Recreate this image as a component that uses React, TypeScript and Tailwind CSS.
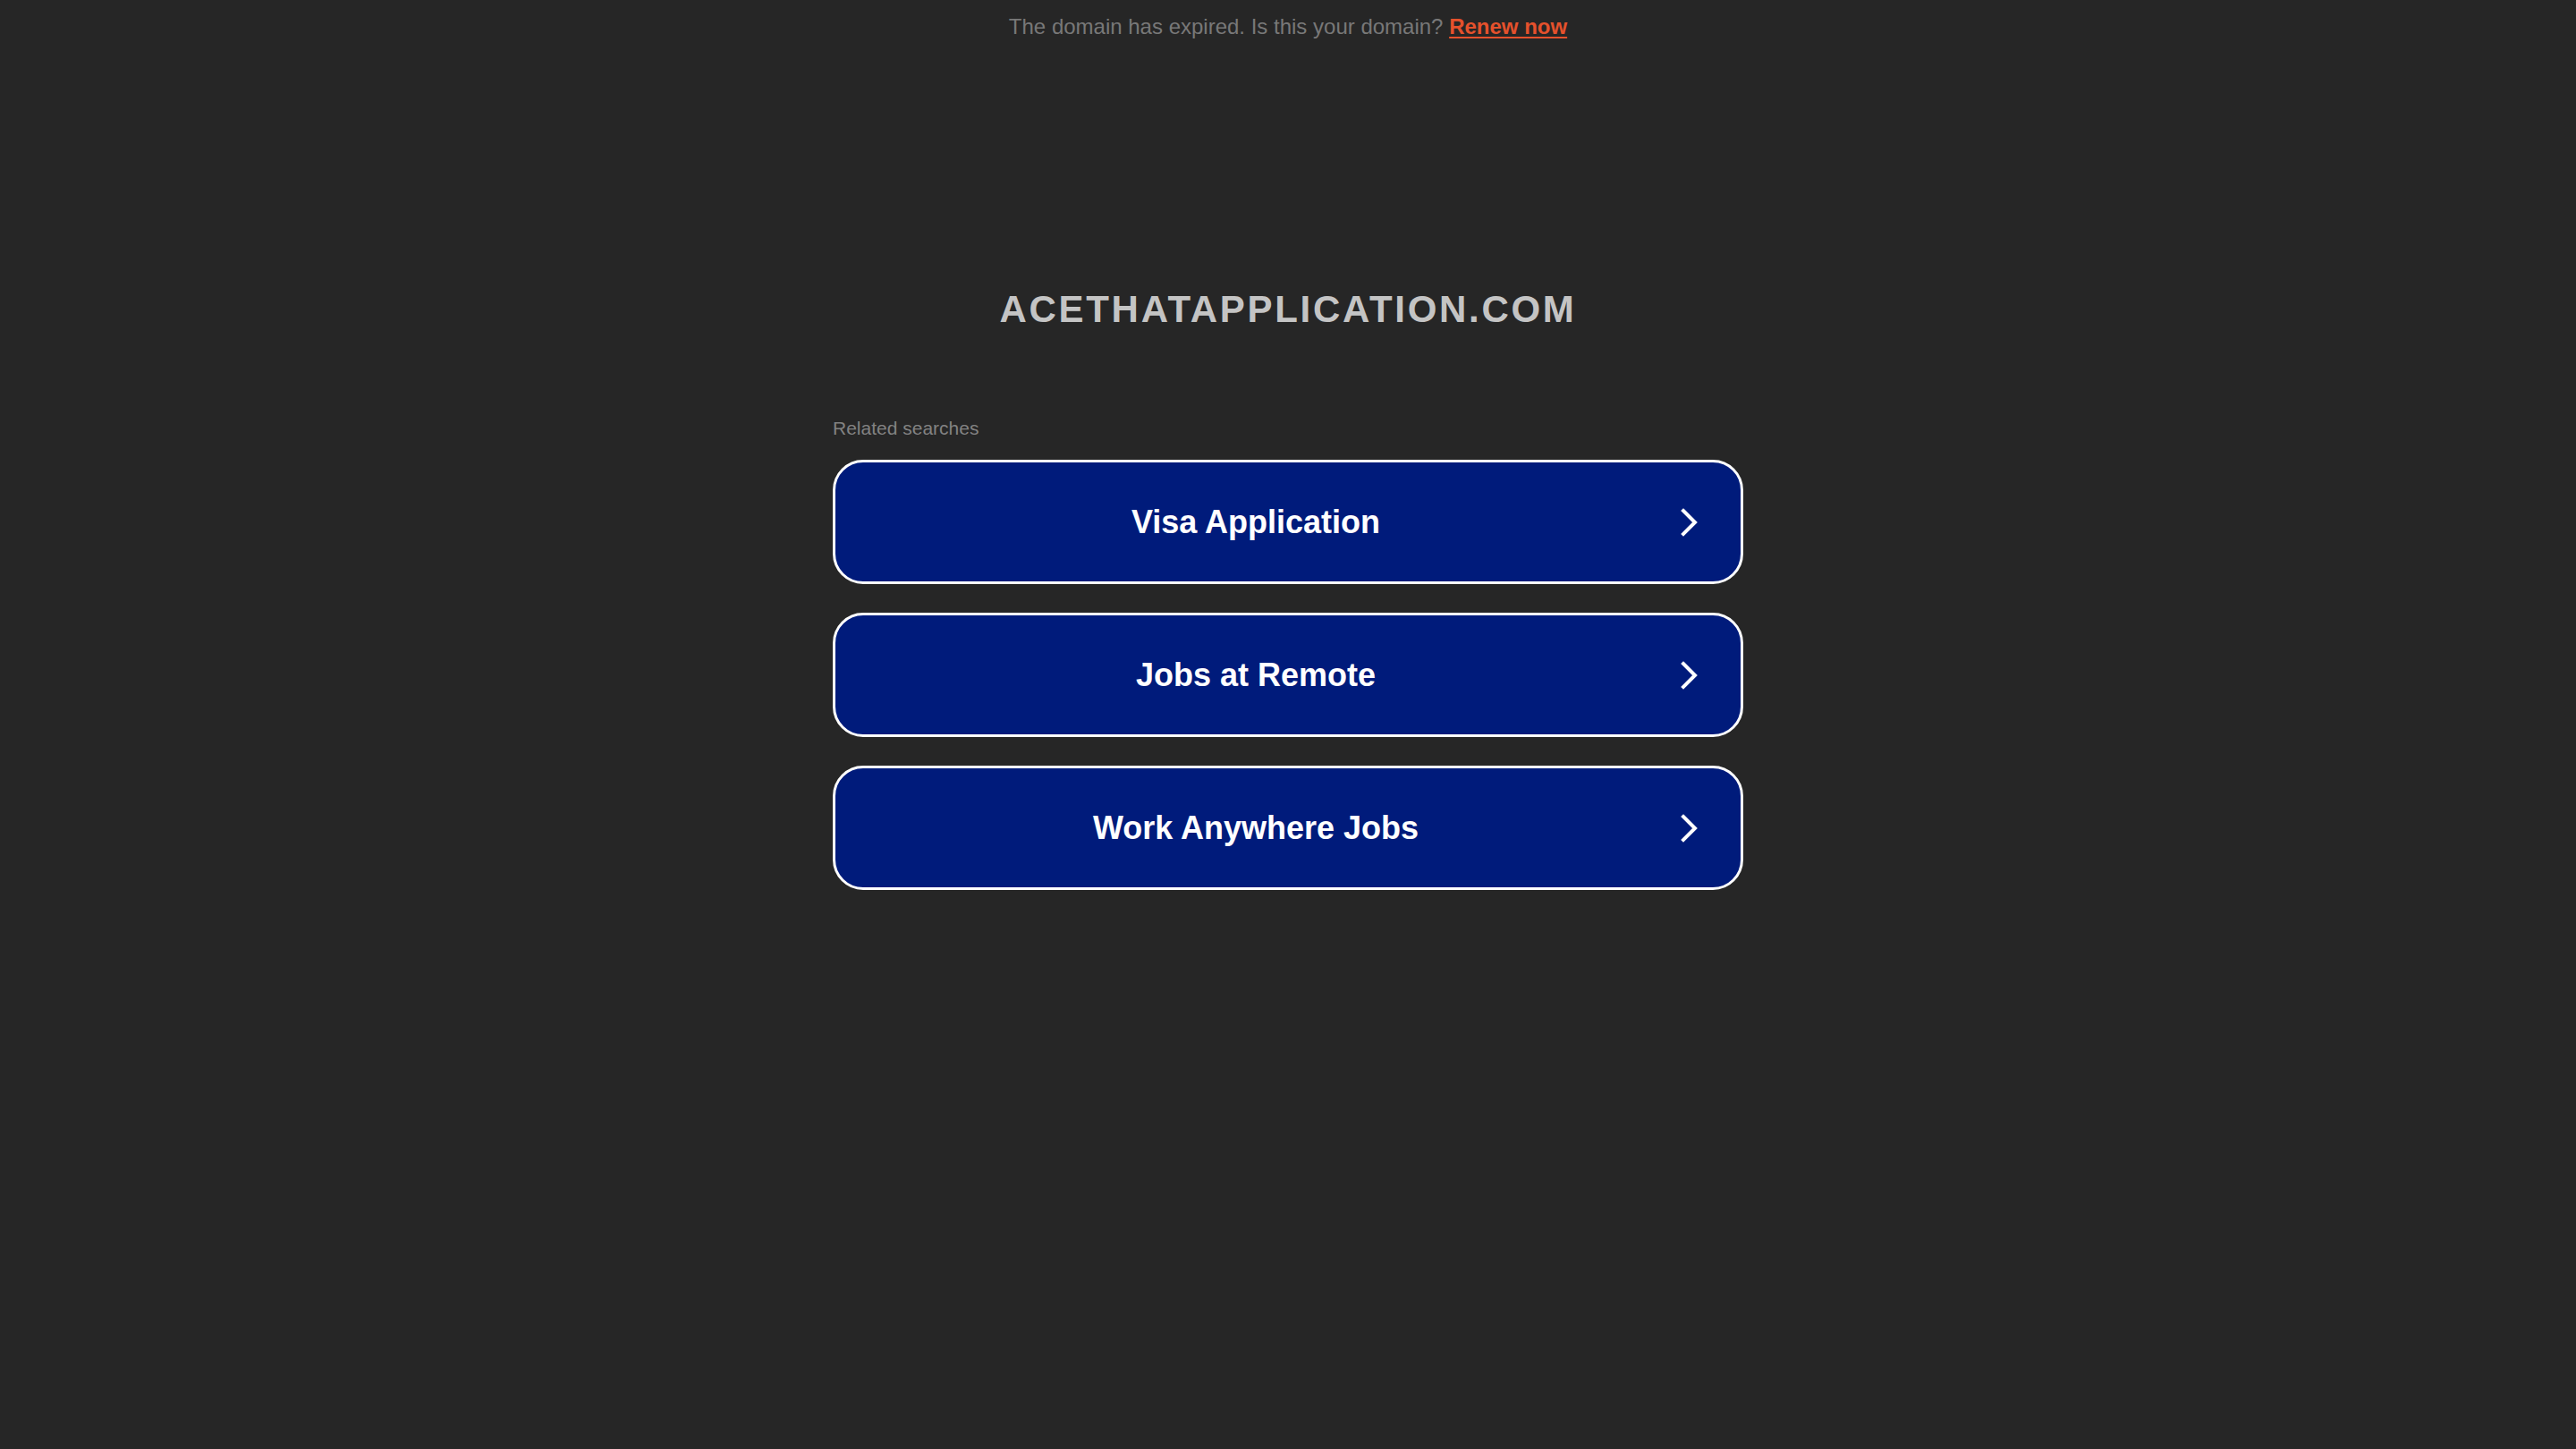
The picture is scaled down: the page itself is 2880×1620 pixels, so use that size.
import React from "react";

const searches = ["Visa Application", "Jobs at Remote", "Work Anywhere Jobs"];

const Chevron = () => (
  <svg width="22" height="34" viewBox="0 0 22 34" fill="none">
    <polyline points="5,4 18,17 5,30" stroke="#ffffff" strokeWidth="4" strokeLinecap="square" strokeLinejoin="miter" />
  </svg>
);

const App = () => {
  return (
    <div className="min-h-screen bg-[#262626] font-['Liberation_Sans',Arial,sans-serif]">
      {/* expired banner */}
      <div className="pt-[16px] text-center text-[24px] leading-[28px] text-[#787878]">
        The domain has expired. Is this your domain?{" "}
        <a href="#" className="font-bold text-[#e5512c] underline underline-offset-[3px] decoration-2">
          Renew now
        </a>
      </div>

      <h1 className="mt-[278px] text-center text-[42px] leading-[48px] font-bold tracking-[2.7px] text-[#c4c4c4]">
        ACETHATAPPLICATION.COM
      </h1>

      <div className="mx-auto mt-[97px] w-[1018px]">
        <div className="text-[21px] leading-[24px] text-[#828282]">Related searches</div>

        <div className="mt-[23px] flex flex-col gap-[32px]">
          {searches.map((s) => (
            <a
              key={s}
              href="#"
              className="flex h-[139px] items-center rounded-[34px] border-[3px] border-white bg-[#001b7b] px-[47px]"
            >
              <span className="flex-1 text-center text-[36px] font-bold text-white">{s}</span>
              <span className="flex w-[72px] justify-end">
                <Chevron />
              </span>
            </a>
          ))}
        </div>
      </div>
    </div>
  );
};

export default App;
